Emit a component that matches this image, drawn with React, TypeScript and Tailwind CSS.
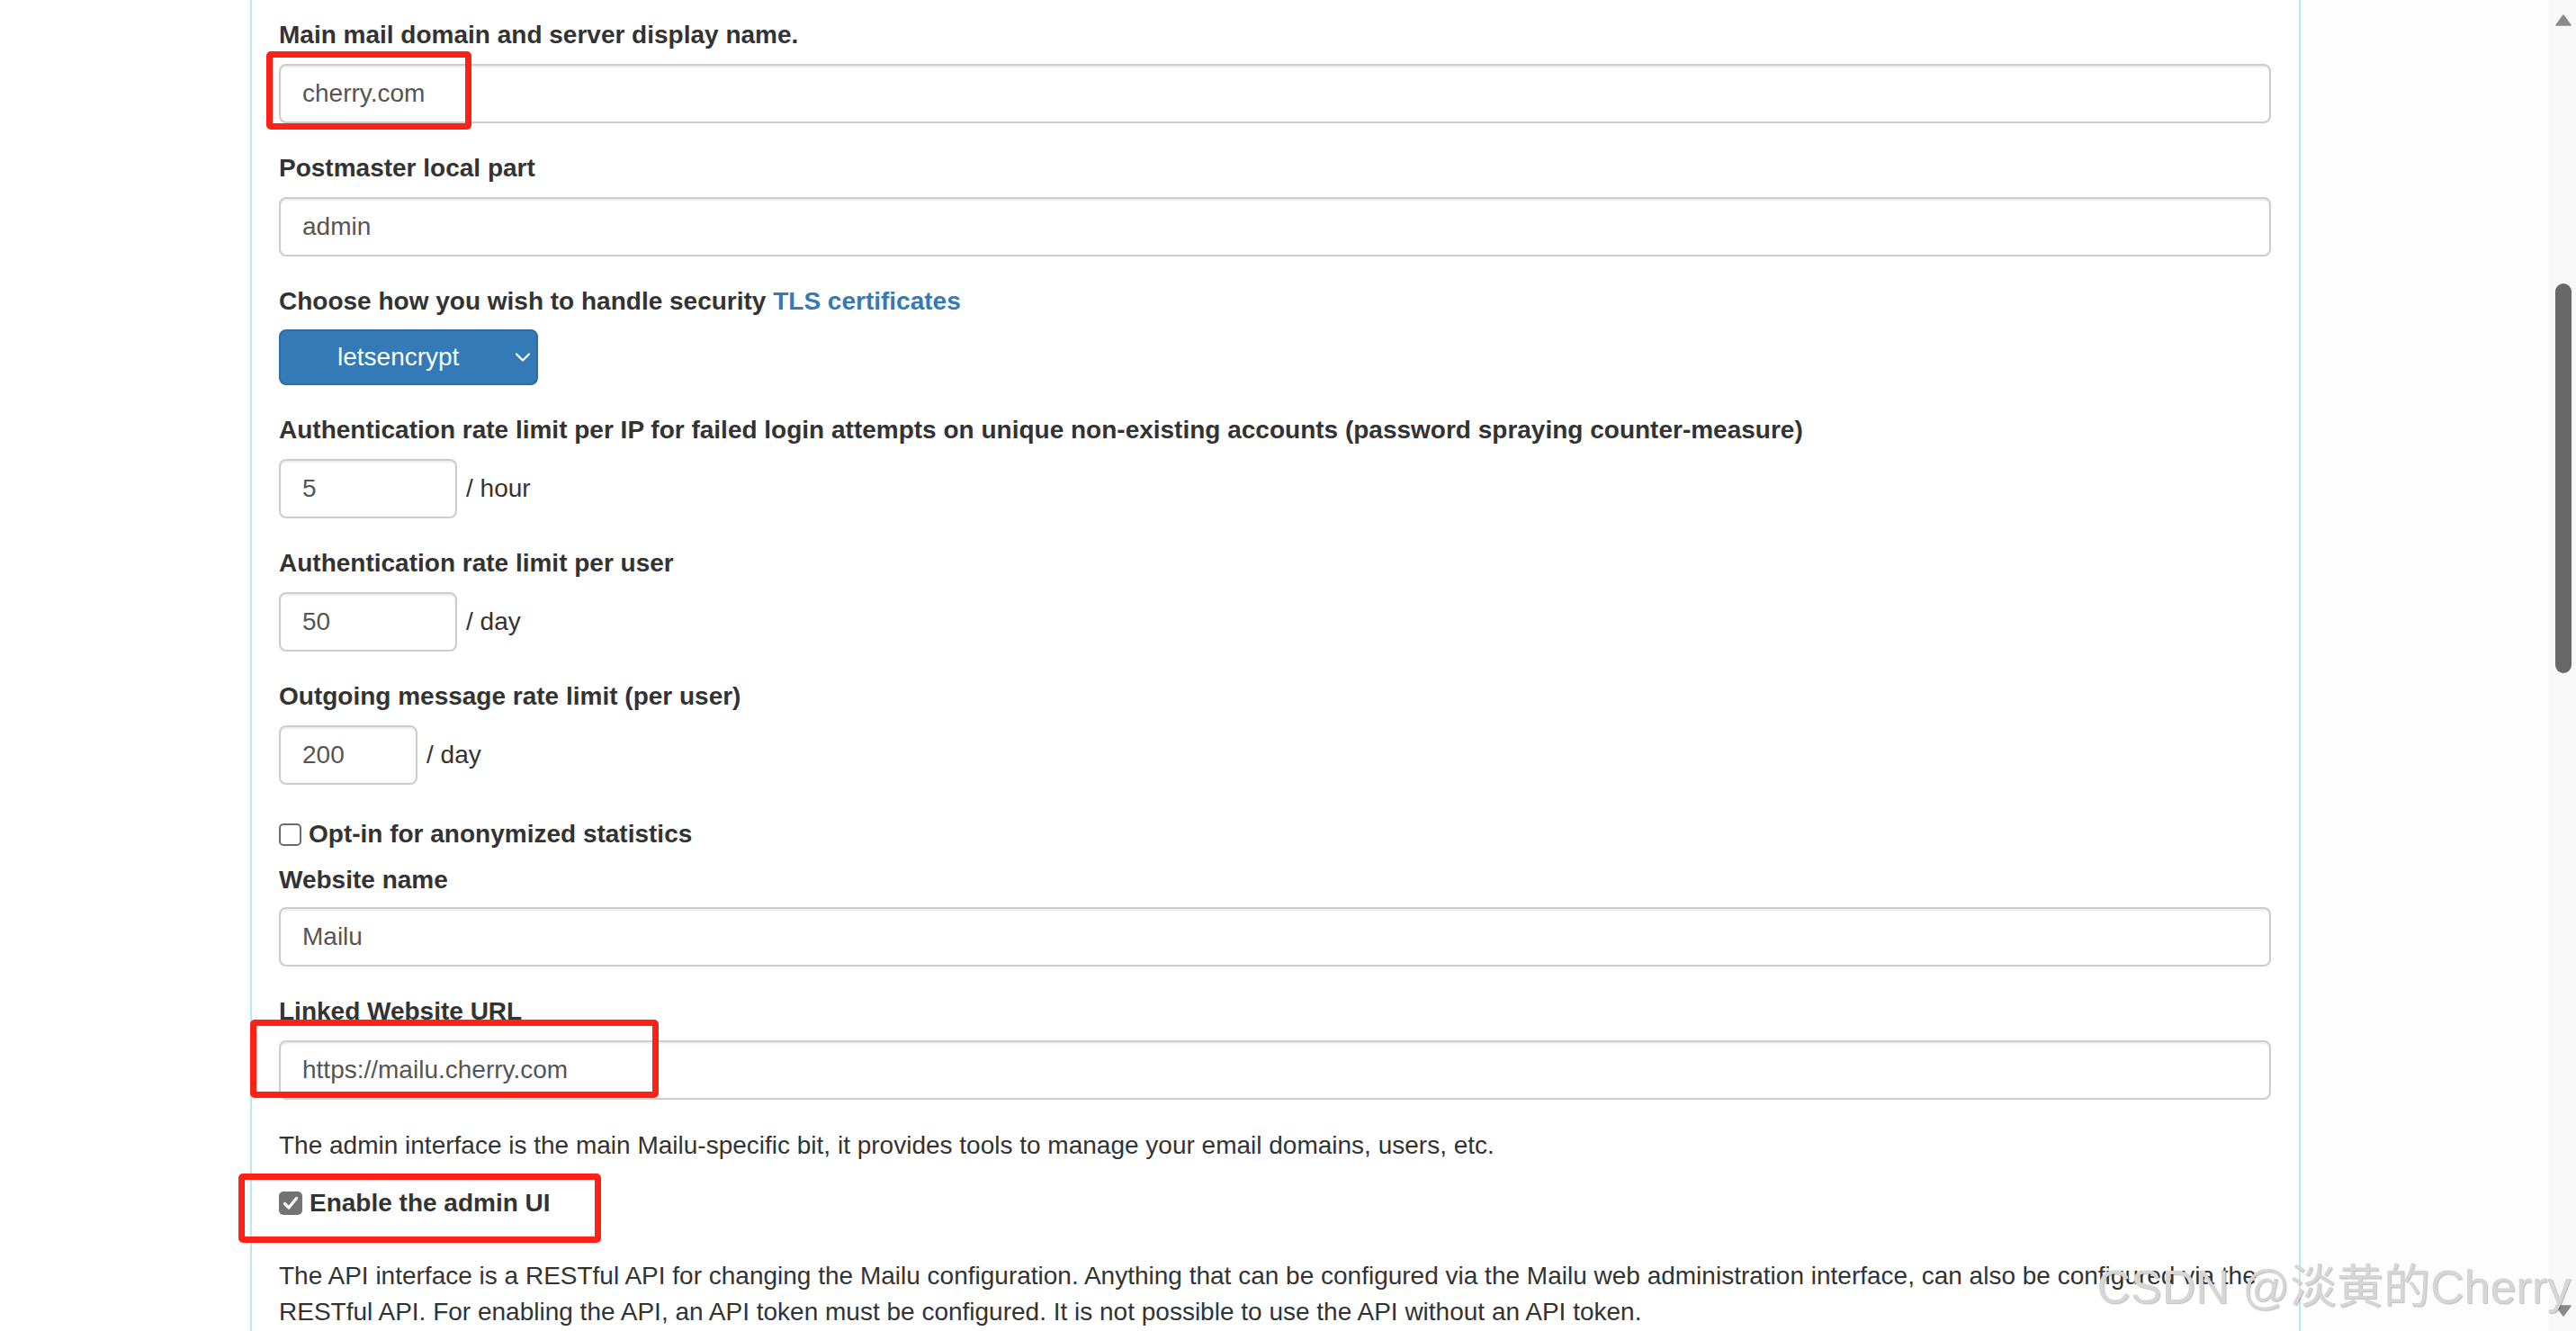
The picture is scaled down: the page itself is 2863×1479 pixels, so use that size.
import React from 'react'

const inputCls =
  'block h-[66px] w-full rounded-[8px] border-2 border-[#cccccc] bg-white px-[24px] text-[28px] text-[#555555] shadow-[inset_0_2px_2px_rgba(0,0,0,0.075)] outline-none'

function Label({ children, className = '' }: { children: React.ReactNode; className?: string }) {
  return <label className={`block font-bold leading-[40px] ${className}`}>{children}</label>
}

function Check({ checked, label }: { checked?: boolean; label: string }) {
  return (
    <div className="flex h-[40px] items-center">
      {checked ? (
        <span className="flex h-[26px] w-[26px] items-center justify-center rounded-[5px] bg-[#737373]">
          <svg width="18" height="16" viewBox="0 0 18 16" fill="none">
            <path d="M2.5 8.5 L7 13 L15.5 2.5" stroke="white" strokeWidth="3.2" strokeLinecap="round" strokeLinejoin="round" />
          </svg>
        </span>
      ) : (
        <span className="h-[25px] w-[25px] rounded-[5px] border-2 border-[#6b6b6b] bg-white" />
      )}
      <span className="ml-[8px] font-bold">{label}</span>
    </div>
  )
}

export default function App() {
  return (
    <div className="relative flex h-[1479px] w-full overflow-hidden bg-white font-['Liberation_Sans',Arial,sans-serif] text-[28px] leading-[40px] text-[#333333]">
      <div className="w-[278px] shrink-0" />

      {/* settings panel */}
      <div className="w-[2279px] shrink-0 border-x-2 border-[#bce8f1] bg-white pl-[30px] pr-[31px] pt-[19px]">
        <Label className="mb-[12px]">Main mail domain and server display name.</Label>
        <input readOnly value="cherry.com" className={`${inputCls} mb-[30px]`} />

        <Label className="mb-[12px]">Postmaster local part</Label>
        <input readOnly value="admin" className={`${inputCls} mb-[30px]`} />

        <Label className="mb-[11px]">
          Choose how you wish to handle security <span className="text-[#337ab7]">TLS certificates</span>
        </Label>
        <div className="mb-[30px] flex h-[62px] w-[288px] items-center justify-between rounded-[8px] border-2 border-[#2e6da4] bg-[#337ab7] pl-[63px] pr-[6px] text-white">
          <span>letsencrypt</span>
          <svg width="18" height="12" viewBox="0 0 18 12" fill="none">
            <path d="M2 2.5 L9 9.5 L16 2.5" stroke="white" strokeWidth="2.2" strokeLinecap="round" strokeLinejoin="round" />
          </svg>
        </div>

        <Label className="mb-[12px]">
          Authentication rate limit per IP for failed login attempts on unique non-existing accounts (password spraying counter-measure)
        </Label>
        <div className="mb-[30px] flex items-center">
          <input readOnly value="5" className={`${inputCls} !w-[198px]`} />
          <span className="ml-[10px]">/ hour</span>
        </div>

        <Label className="mb-[12px]">Authentication rate limit per user</Label>
        <div className="mb-[30px] flex items-center">
          <input readOnly value="50" className={`${inputCls} !w-[198px]`} />
          <span className="ml-[10px]">/ day</span>
        </div>

        <Label className="mb-[12px]">Outgoing message rate limit (per user)</Label>
        <div className="mb-[35px] flex items-center">
          <input readOnly value="200" className={`${inputCls} !w-[154px]`} />
          <span className="ml-[10px]">/ day</span>
        </div>

        <div className="mb-[11px]">
          <Check label="Opt-in for anonymized statistics" />
        </div>

        <Label className="mb-[10px]">Website name</Label>
        <input readOnly value="Mailu" className={`${inputCls} mb-[30px]`} />

        <Label className="mb-[12px]">Linked Website URL</Label>
        <input readOnly value="https://mailu.cherry.com" className={`${inputCls} mb-[31px]`} />

        <p className="mb-[24px]">
          The admin interface is the main Mailu-specific bit, it provides tools to manage your email domains, users, etc.
        </p>

        <div className="mb-[41px]">
          <Check checked label="Enable the admin UI" />
        </div>

        <p>
          The API interface is a RESTful API for changing the Mailu configuration. Anything that can be configured via the
          Mailu web administration interface, can also be configured via the RESTful API. For enabling the API, an API token
          must be configured. It is not possible to use the API without an API token.
        </p>
      </div>

      <div className="flex-1 bg-[#fdfdfd]" />

      {/* window scrollbar */}
      <div className="flex w-[30px] shrink-0 flex-col bg-[#f8f8f8] pl-[7px] pr-[5px] pt-[16px] pb-[16px]">
        <svg width="18" height="13" viewBox="0 0 18 13">
          <path d="M9 1 L17 12 L1 12 Z" fill="#8a8a8a" stroke="#8a8a8a" strokeWidth="1.5" strokeLinejoin="round" />
        </svg>
        <div className="mt-[286px] h-[433px] w-[18px] rounded-full bg-[#686868]" />
        <div className="flex-1" />
        <svg width="18" height="13" viewBox="0 0 18 13">
          <path d="M1 1 L17 1 L9 12 Z" fill="#8a8a8a" stroke="#8a8a8a" strokeWidth="1.5" strokeLinejoin="round" />
        </svg>
      </div>

      {/* red annotation boxes drawn over the screenshot */}
      <div className="pointer-events-none absolute left-[296px] top-[57px] h-[87px] w-[228px] rounded-[5px] border-[7px] border-[#fe2116]" />
      <div className="pointer-events-none absolute left-[278px] top-[1133px] h-[87px] w-[454px] rounded-[5px] border-[7px] border-[#fe2116]" />
      <div className="pointer-events-none absolute left-[265px] top-[1304px] h-[77px] w-[403px] rounded-[5px] border-[7px] border-[#fe2116]" />

      {/* watermark */}
      <div className="pointer-events-none absolute right-[6px] top-[1396px] whitespace-nowrap font-['Liberation_Sans','Noto_Sans_CJK_SC',sans-serif] text-[52px] leading-[68px] text-[#d6d6d6] [text-shadow:1px_1px_1px_rgba(0,0,0,0.25)]">
        CSDN @淡黄的Cherry
      </div>
    </div>
  )
}
